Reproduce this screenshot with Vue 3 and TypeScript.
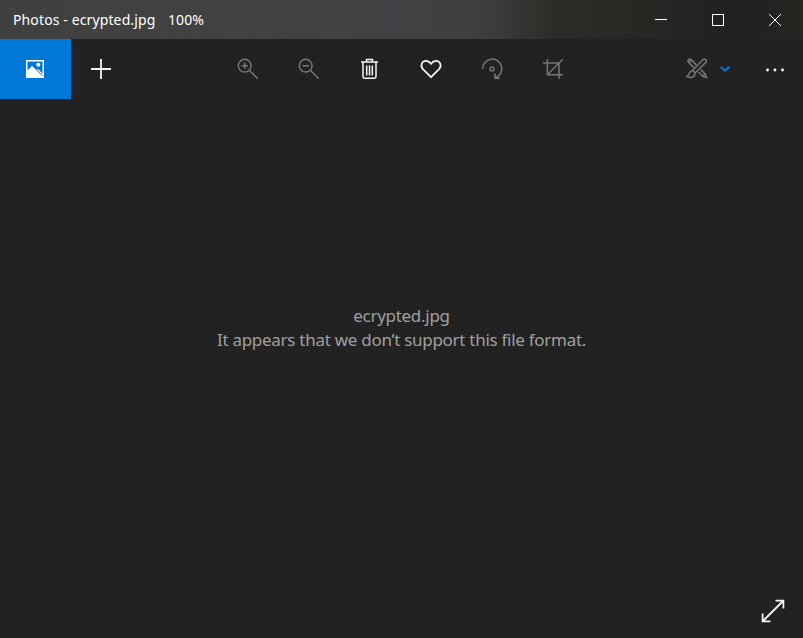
<script setup lang="ts">
import { ref } from 'vue'

const fileName = ref<string>('ecrypted.jpg')
const zoom = ref<number>(100)
</script>

<template>
  <main class="window">
    <header class="titlebar">
      <span class="title">Photos - {{ fileName }}</span>
      <span class="percent">{{ zoom }}%</span>
      <div class="controls">
        <svg viewBox="0 0 12 12"><path d="M0 5.5H12" /></svg>
        <svg viewBox="0 0 12 12"><rect x=".5" y=".5" width="11" height="11" /></svg>
        <svg viewBox="0 0 12 12"><path d="M0 0L12 12M12 0L0 12" /></svg>
      </div>
    </header>

    <nav class="toolbar">
      <div class="collection">
        <svg viewBox="0 0 18 18">
          <path fill="#fff" fill-rule="evenodd" d="M0 0H18V18H0ZM1.5 1.5V10.5L6 6L10.5 10L12 9L16.5 13.5V1.5Z" />
          <circle cx="12.3" cy="4.7" r="2" fill="#fff" />
          <path d="M10 9.3L16.3 15.6" stroke="#0078d7" stroke-width="1" />
        </svg>
      </div>
      <svg class="icon add" viewBox="0 0 24 24"><path d="M2 12H22M12 2V22" stroke-width="1.8" /></svg>
      <div class="tools">
        <svg class="icon dim" viewBox="0 0 24 24">
          <circle cx="8.7" cy="8.7" r="6.4" /><path d="M13.3 13.3L21.8 21.8M5.5 8.7H12M8.7 5.5V12" />
        </svg>
        <svg class="icon dim" viewBox="0 0 24 24">
          <circle cx="8.7" cy="8.7" r="6.4" /><path d="M13.3 13.3L21.8 21.8M5.5 8.7H12" />
        </svg>
        <svg class="icon" viewBox="0 0 24 24">
          <path d="M3 5H20M8.5 4.5V2.5H14.5V4.5M5 5V19.5Q5 21.2 6.5 21.2H16.5Q18 21.2 18 19.5V5M8.7 8.5V18.5M11.5 8.5V18.5M14.3 8.5V18.5" />
        </svg>
        <svg class="icon" viewBox="0 0 24 24">
          <path d="M12 20.2L3.9 12.2C.9 9 2.7 3.8 7 3.8C9.3 3.8 10.9 5.2 12 6.7C13.1 5.2 14.7 3.8 17 3.8C21.3 3.8 23.1 9 20.1 12.2Z" stroke-width="1.7" />
        </svg>
        <svg class="icon dim" viewBox="0 0 24 24">
          <path d="M2.6 12A9.6 9.6 0 1 1 15.2 20.8M15 16.6V21.3H19.8" /><circle cx="12" cy="12" r="2" />
        </svg>
        <svg class="icon dim" viewBox="0 0 24 24">
          <path d="M2 6H18V22M6.4 2V17.7H22M6.4 17.7L21.8 2.3" />
        </svg>
      </div>
      <svg class="icon dim edit" viewBox="0 0 24 24">
        <path d="M8.9 10.6L3.6 5.3C1.8 3.6 4 .9 6 2.6L11.3 7.9M3.6 5.6L6.2 3M13.5 15L17.8 19.3L21.6 20.6L20.2 17L15.8 12.6M17.8 19.3L20.2 17" />
        <path d="M7.5 13.4L17.8 2.8C19.8 .8 22.6 3.4 20.7 5.5L10.1 16ZM7.5 13.4C4.4 13.2 5 17.4 2 19.4C5 21.6 10 20.6 10.1 16" />
      </svg>
      <svg class="chevron" viewBox="0 0 10 6"><path d="M.7 .7L5 4.8L9.3 .7" /></svg>
      <svg class="more" viewBox="0 0 20 4">
        <circle cx="2.5" cy="2" r="1.4" /><circle cx="10" cy="2" r="1.4" /><circle cx="17.5" cy="2" r="1.4" />
      </svg>
    </nav>

    <section class="viewer">
      <p class="name">{{ fileName }}</p>
      <p class="message">It appears that we don’t support this file format.</p>
    </section>

    <footer class="bottom">
      <svg class="icon" viewBox="0 0 24 24"><path d="M2 22L22 2M14.5 1.6H22.4V9.5M1.6 14.5V22.4H9.5" stroke-width="1.8" /></svg>
    </footer>
  </main>
</template>

<style>
body { margin: 0; background: #222; }
</style>

<style scoped>
.window {
  display: flex;
  flex-direction: column;
  width: 803px;
  height: 638px;
  overflow: hidden;
  background: #222;
  color: #fff;
  font-family: "Noto Sans", "Open Sans", sans-serif;
}
svg { display: block; flex: none; fill: none; stroke: none; }
.titlebar {
  display: flex;
  align-items: center;
  box-sizing: border-box;
  height: 39px;
  padding-left: 13px;
  font-size: 14px;
  line-height: 39px;
  white-space: nowrap;
  background: linear-gradient(90deg, #404040 0, #424242 240px, #404144 400px, #404040 470px, #3a3a39 500px, #2d2b27 555px, #292824 630px, #222 710px, #222 760px, #262521 803px);
}
.title { width: 155px; letter-spacing: 0.12px; }
.percent { letter-spacing: 0.1px; }
.controls { display: flex; gap: 45px; margin-left: auto; margin-right: 22px; }
.controls svg { width: 12px; height: 12px; stroke: #fff; stroke-width: 1; }
.toolbar { display: flex; align-items: center; height: 60px; flex: none; }
.collection {
  display: flex;
  align-items: center;
  box-sizing: border-box;
  width: 71px;
  height: 60px;
  padding-left: 26px;
  background: #0078d7;
}
.collection svg { width: 18px; height: 18px; }
.icon { width: 24px; height: 24px; stroke: #f5f5f5; stroke-width: 1.5; }
.dim { stroke: #777; }
.add { margin-left: 18px; }
.tools { display: flex; gap: 37px; margin-left: 123px; }
.edit { margin-left: 120px; }
.chevron { width: 10px; height: 6px; margin-left: 11px; stroke: #0078d7; stroke-width: 2; }
.more { width: 20px; height: 4px; margin: 2px 0 0 35px; fill: #fff; }
.viewer {
  flex: 1;
  padding-top: 205px;
  text-align: center;
  color: #a0a0a0;
  font-size: 17px;
  line-height: 24px;
  white-space: nowrap;
}
.viewer p { margin: 0; }
.name { letter-spacing: -0.28px; }
.message { letter-spacing: -0.28px; }
.bottom { display: flex; justify-content: flex-end; padding: 0 18px 15px 0; }
</style>
